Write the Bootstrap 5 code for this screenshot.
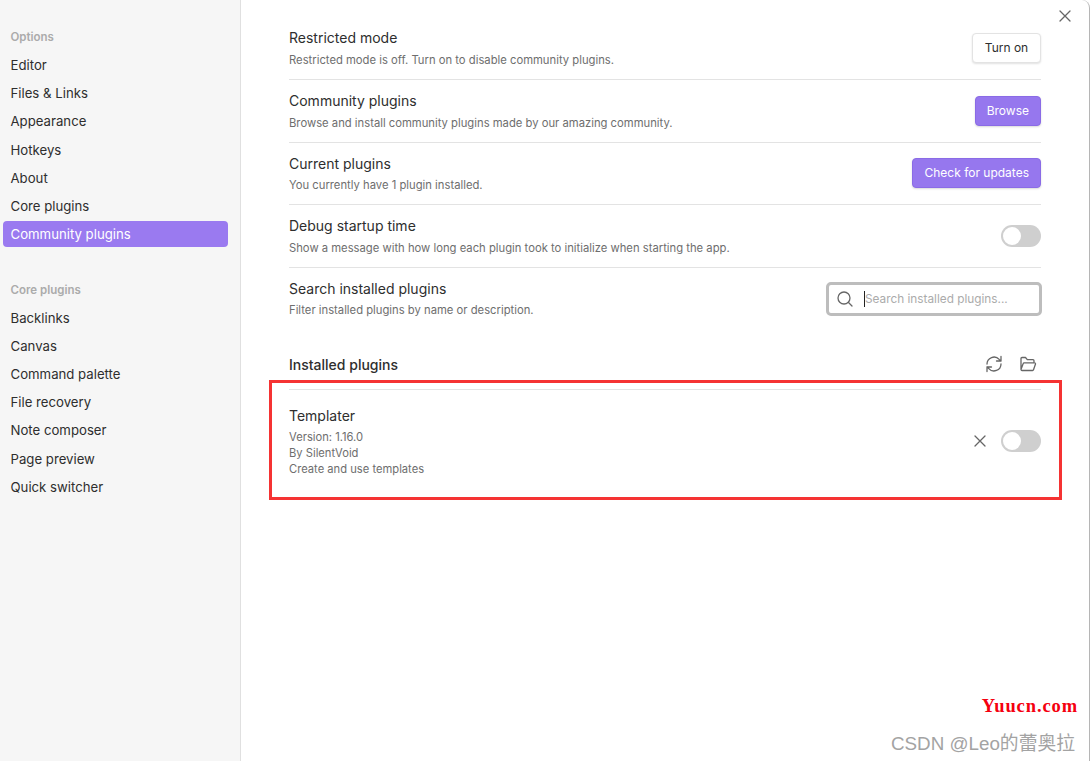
<!doctype html>
<html lang="en">
<head>
<meta charset="utf-8">
<title>Settings</title>
<link href="https://cdn.jsdelivr.net/npm/bootstrap@5.3.3/dist/css/bootstrap.min.css" rel="stylesheet">
<style>
html, body { height: 100%; margin: 0; }
body { font-family: Inter, "Noto Sans CJK SC", sans-serif; background: #fff; color: #2e2e2e; overflow: hidden; }
.modal-shell { height: 761px; width: 1090px; border-right: 1px solid #b5b5b5; border-top-right-radius: 8px; position: relative; }
.side-pane { width: 241px; flex: none; background: #f6f6f6; border-right: 1px solid #e0e0e0; padding: 23px 12px 0 3px; }
.side-head { font-size: 11.5px; font-weight: 600; color: #ababab; height: 28px; line-height: 28px; padding-left: 7.5px; }
.side-head.later { margin-top: 28.5px; }
.side-item { font-size: 13.2px; height: 28.2px; line-height: 28.2px; padding-left: 7.5px; color: #2e2e2e; }
.side-item.on { background: #9a7af0; color: #fff; border-radius: 4px; height: 26px; line-height: 26px; margin: 1px 0 1px; }
.main-pane { padding: 16.5px 48px 0 48px; width: 848px; }
.set-row { height: 62.6px; }
.set-row + .set-row { border-top: 1px solid #e3e3e3; }
.set-name { font-size: 14px; line-height: 20px; color: #2e2e2e; }
.set-desc { font-size: 11.25px; line-height: 16px; color: #6e6e6e; margin-top: 3.5px; }
.btn-plain, .btn-violet { font-size: 12px; border-radius: 4px; padding: 0 11px; height: 30px; line-height: 28px; }
.btn-plain { background: #fff; color: #2e2e2e; border: 1px solid #e3e3e3; box-shadow: 0 1px 2px rgba(0,0,0,.12); width: 69px; padding: 0; }
.btn-violet { background: #9677ee; color: #fff; border: 1px solid #8a6be6; box-shadow: 0 1px 2px rgba(0,0,0,.15); }
.toggle-off { width: 40px; height: 22px; background: #cfcfcf; border-radius: 11px; position: relative; }
.toggle-off::after { content: ""; position: absolute; left: 2px; top: 2px; width: 18px; height: 18px; border-radius: 50%; background: #fff; }
.search-box { width: 216px; height: 34px; border: 3px solid #bdbdbd; border-radius: 5px; margin-right: -1px; padding-left: 7px; gap: 10px; }
.search-text { font-size: 11.8px; color: #ababab; border-left: 1px solid #222; line-height: 16px; height: 16px; white-space: nowrap; }
.list-head { height: 62px; padding-top: 26px; border-bottom: 1px solid #e3e3e3; margin-top: -1px; }
.list-title { font-size: 14px; font-weight: 500; line-height: 21px; }
.list-tools { gap: 16px; margin-right: 4px; margin-top: 1px; }
.plugin-row { padding-top: 16px; }
.plugin-meta { font-size: 11.2px; line-height: 15.8px; color: #6e6e6e; margin-top: 4px; }
.plugin-tools { margin-top: 24px; gap: 15px; }
.ico { stroke: #666; fill: none; stroke-width: 1.3; stroke-linecap: round; stroke-linejoin: round; display: block; }
.close-x { position: absolute; left: 1058px; top: 9px; }
.red-frame { position: absolute; left: 269px; top: 380px; width: 793px; height: 120px; border: 3px solid #f53333; pointer-events: none; }
.mark-yuucn { position: absolute; right: 11px; top: 696px; font: bold 18.5px "Liberation Serif", serif; color: #f5000f; letter-spacing: .9px; }
.mark-csdn { position: absolute; right: 14px; top: 732px; font-size: 18.8px; line-height: 24px; color: #a3a3a3; font-family: "Liberation Sans", "Noto Sans CJK SC", sans-serif; }
</style>
</head>
<body>
<div class="modal-shell d-flex">
  <div class="side-pane">
    <div class="side-head">Options</div>
    <div class="side-item">Editor</div>
    <div class="side-item">Files &amp; Links</div>
    <div class="side-item">Appearance</div>
    <div class="side-item">Hotkeys</div>
    <div class="side-item">About</div>
    <div class="side-item">Core plugins</div>
    <div class="side-item on">Community plugins</div>
    <div class="side-head later">Core plugins</div>
    <div class="side-item">Backlinks</div>
    <div class="side-item">Canvas</div>
    <div class="side-item">Command palette</div>
    <div class="side-item">File recovery</div>
    <div class="side-item">Note composer</div>
    <div class="side-item">Page preview</div>
    <div class="side-item">Quick switcher</div>
  </div>
  <div class="main-pane">
    <div class="set-row d-flex justify-content-between align-items-center">
      <div><div class="set-name">Restricted mode</div><div class="set-desc">Restricted mode is off. Turn on to disable community plugins.</div></div>
      <button class="btn-plain">Turn on</button>
    </div>
    <div class="set-row d-flex justify-content-between align-items-center">
      <div><div class="set-name">Community plugins</div><div class="set-desc">Browse and install community plugins made by our amazing community.</div></div>
      <button class="btn-violet">Browse</button>
    </div>
    <div class="set-row d-flex justify-content-between align-items-center">
      <div><div class="set-name">Current plugins</div><div class="set-desc">You currently have 1 plugin installed.</div></div>
      <button class="btn-violet">Check for updates</button>
    </div>
    <div class="set-row d-flex justify-content-between align-items-center">
      <div><div class="set-name">Debug startup time</div><div class="set-desc">Show a message with how long each plugin took to initialize when starting the app.</div></div>
      <div class="toggle-off"></div>
    </div>
    <div class="set-row d-flex justify-content-between align-items-center">
      <div><div class="set-name">Search installed plugins</div><div class="set-desc">Filter installed plugins by name or description.</div></div>
      <div class="search-box d-flex align-items-center">
        <svg class="ico" width="18" height="18" viewBox="0 0 18 18"><circle cx="8" cy="8" r="6"/><path d="M12.5 12.5 16 16"/></svg>
        <div class="search-text">Search installed plugins...</div>
      </div>
    </div>
    <div class="list-head d-flex justify-content-between align-items-start">
      <div class="list-title">Installed plugins</div>
      <div class="list-tools d-flex">
        <svg class="ico" width="18" height="18" viewBox="0 0 18 18"><path d="M2 9a7 7 0 0 1 12.2-4.6L16 6M16 1.5V6h-4.5M16 9a7 7 0 0 1-12.2 4.6L2 12M2 16.5V12h4.5"/></svg>
        <svg class="ico" width="18" height="18" viewBox="0 0 18 18"><path d="M2 14.5V3.5a1 1 0 0 1 1-1h3.5l1.8 2.2H14a1 1 0 0 1 1 1V7.5M2 14.5a1 1 0 0 0 1 1h10.5a1 1 0 0 0 1-.7l2-5.8a1 1 0 0 0-1-1.2H5.2a1 1 0 0 0-1 .7L2 14.5Z"/></svg>
      </div>
    </div>
    <div class="plugin-row d-flex justify-content-between">
      <div>
        <div class="set-name">Templater</div>
        <div class="plugin-meta">Version: 1.16.0<br>By SilentVoid<br>Create and use templates</div>
      </div>
      <div class="plugin-tools d-flex align-items-center align-self-start">
        <svg class="ico" width="12" height="12" viewBox="0 0 12 12"><path d="M1 1l10 10M11 1 1 11"/></svg>
        <div class="toggle-off"></div>
      </div>
    </div>
  </div>
  <svg class="ico close-x" width="14" height="14" viewBox="0 0 14 14"><path d="M2 2l10 10M12 2 2 12"/></svg>
  <div class="red-frame"></div>
  <div class="mark-yuucn">Yuucn.com</div>
  <div class="mark-csdn">CSDN @Leo的蕾奥拉</div>
</div>
<script src="https://cdn.jsdelivr.net/npm/bootstrap@5.3.3/dist/js/bootstrap.bundle.min.js"></script>
</body>
</html>
